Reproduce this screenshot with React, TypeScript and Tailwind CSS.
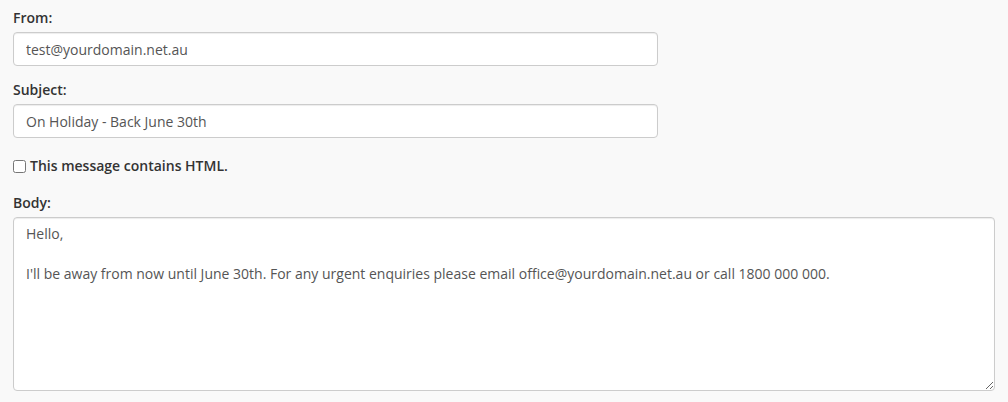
import { useState } from "react";

const body =
  "Hello,\n\nI'll be away from now until June 30th. For any urgent enquiries please email office@yourdomain.net.au or call 1800 000 000.";

const inputCls =
  "block h-[34px] w-[645px] rounded-[4px] border border-[#cccccc] bg-white px-3 text-[14px] leading-[20px] text-[#555555] shadow-[inset_0_1px_1px_rgba(0,0,0,0.075)] outline-none";

export default function App() {
  const [from, setFrom] = useState("test@yourdomain.net.au");
  const [subject, setSubject] = useState("On Holiday - Back June 30th");
  const [isHtml, setIsHtml] = useState(false);
  const [text, setText] = useState(body);

  return (
    <div className="min-h-[402px] bg-[#f9f9f9] px-[13px] pt-[9px] font-['Open_Sans',sans-serif] text-[14px] text-[#333333]">
      <div className="mb-[15px]">
        <label className="mb-[5px] block leading-[18px] font-semibold">From:</label>
        <input className={inputCls} value={from} onChange={(e) => setFrom(e.target.value)} />
      </div>

      <div className="mb-[15px]">
        <label className="mb-[5px] block leading-[18px] font-semibold">Subject:</label>
        <input className={inputCls} value={subject} onChange={(e) => setSubject(e.target.value)} />
      </div>

      <label className="mb-[15px] flex h-[26px] items-center gap-[4px] font-semibold leading-[18px]">
        <input
          type="checkbox"
          className="m-0 h-[13px] w-[13px]"
          checked={isHtml}
          onChange={(e) => setIsHtml(e.target.checked)}
        />
        This message contains HTML.
      </label>

      <div>
        <label className="mb-[5px] block leading-[18px] font-semibold">Body:</label>
        <textarea
          className="block h-[174px] w-full rounded-[4px] border border-[#cccccc] bg-white px-3 py-[6px] text-[14px] leading-[20px] text-[#555555] shadow-[inset_0_1px_1px_rgba(0,0,0,0.075)] outline-none"
          value={text}
          onChange={(e) => setText(e.target.value)}
        />
      </div>
    </div>
  );
}
